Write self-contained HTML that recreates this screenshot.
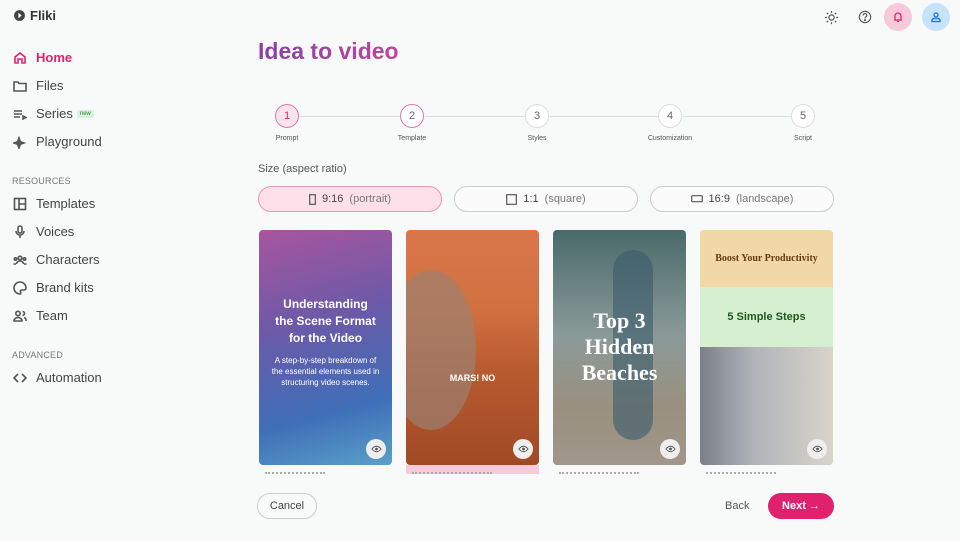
<!DOCTYPE html><html><head><style>
*{margin:0;padding:0;box-sizing:border-box}
body{width:960px;height:541px;background:#f8f9f9;font-family:"Liberation Sans",sans-serif;color:#3a3a3a;position:relative;overflow:hidden}
.a{position:absolute}
.nav{left:13px;font-size:13px;display:flex;align-items:center;gap:9px;color:#444}
.nav svg{width:14px;height:14px;fill:none;stroke:#555;stroke-width:1.6}
.sec{left:12px;font-size:9px;color:#777;letter-spacing:.2px}
.step{width:24px;height:24px;border-radius:50%;border:1px solid #ddd;background:#fff;font-size:11px;color:#666;display:flex;align-items:center;justify-content:center}
.sl{font-size:7px;color:#555;text-align:center;width:80px}
.line{height:1px;background:#ddd;top:116px}
.btn{top:186px;height:26px;width:184px;border:1px solid #ccc;border-radius:13px;font-size:11px;color:#444;display:flex;align-items:center;justify-content:center;gap:6px;background:#fbfbfb}
.btn span{color:#777}
.card{top:230px;width:133px;height:235px;border-radius:4px;overflow:hidden}
.eye{position:absolute;right:6px;bottom:6px;width:20px;height:20px;border-radius:50%;background:#eee;display:flex;align-items:center;justify-content:center}
.cap{top:472px;height:3px;border-top:2px dotted #aaa;width:80px}
</style></head><body>
<div class="a" style="left:13px;top:8px;font-size:13px;font-weight:bold;color:#333;display:flex;align-items:center;gap:4px"><svg width="13" height="13" viewBox="0 0 12 12"><circle cx="6" cy="6" r="5" fill="#444"/><path d="M5 3.5L8 6 5 8.5z" fill="#fff"/></svg>Fliki</div>
<div class="a nav" style="top:50px;color:#e0226e;font-weight:bold"><svg viewBox="0 0 14 14" style="stroke:#e0226e"><path d="M2 6L7 2l5 4v6H9V8H5v4H2z"/></svg>Home</div>
<div class="a nav" style="top:78px"><svg viewBox="0 0 14 14"><path d="M1 3h4l1 1.5h7V12H1z"/></svg>Files</div>
<div class="a nav" style="top:106px"><svg viewBox="0 0 14 14"><path d="M1 4h8M1 7h8M1 10h6M10 9l3 1.5-3 1.5z"/></svg>Series<span style="font-size:6px;background:#d8f3dc;color:#2a8a40;padding:1px 3px;border-radius:2px;margin-left:-5px">new</span></div>
<div class="a nav" style="top:134px"><svg viewBox="0 0 14 14"><path d="M6 3l1.3 3.7L11 8l-3.7 1.3L6 13l-1.3-3.7L1 8l3.7-1.3z" fill="#555"/></svg>Playground</div>
<div class="a sec" style="top:176px">RESOURCES</div>
<div class="a nav" style="top:196px"><svg viewBox="0 0 14 14"><rect x="1.5" y="1.5" width="11" height="11"/><path d="M6 1.5v11M6 7h6.5"/></svg>Templates</div>
<div class="a nav" style="top:224px"><svg viewBox="0 0 14 14"><rect x="5" y="1" width="4" height="7" rx="2"/><path d="M3 6a4 4 0 008 0M7 10v3"/></svg>Voices</div>
<div class="a nav" style="top:252px"><svg viewBox="0 0 14 14"><circle cx="7" cy="5" r="1.8"/><circle cx="2.5" cy="6" r="1.2"/><circle cx="11.5" cy="6" r="1.2"/><path d="M3.5 11a3.5 3 0 017 0M0.5 11h2.5M11 11h2.5"/></svg>Characters</div>
<div class="a nav" style="top:280px"><svg viewBox="0 0 14 14"><path d="M7 1a6 6 0 100 12c1 0 1-1 .5-2s0-2 1.5-2h2a2 2 0 002-2A6 6 0 007 1z"/></svg>Brand kits</div>
<div class="a nav" style="top:308px"><svg viewBox="0 0 14 14"><circle cx="5" cy="4.5" r="2.2"/><path d="M1 12a4 3.5 0 018 0zM9.5 2.5a2 2 0 010 4M11 8.5a3 3 0 012 3.5"/></svg>Team</div>
<div class="a sec" style="top:350px">ADVANCED</div>
<div class="a nav" style="top:370px"><svg viewBox="0 0 14 14"><path d="M5 3L1 7l4 4M9 3l4 4-4 4"/></svg>Automation</div>

<svg class="a" style="left:824px;top:10px" width="15" height="15" viewBox="0 0 16 16" fill="none" stroke="#555" stroke-width="1.3"><circle cx="8" cy="8" r="2.8"/><path d="M8 1v2M8 13v2M1 8h2M13 8h2M3 3l1.4 1.4M11.6 11.6L13 13M3 13l1.4-1.4M11.6 4.4L13 3"/></svg>
<svg class="a" style="left:858px;top:10px" width="14" height="14" viewBox="0 0 16 16" fill="none" stroke="#555" stroke-width="1.3"><circle cx="8" cy="8" r="6.5"/><path d="M6 6.2a2 2 0 113 1.6c-.8.4-1 .9-1 1.7"/><circle cx="8" cy="11.5" r=".5" fill="#555"/></svg>
<div class="a" style="left:884px;top:3px;width:28px;height:28px;border-radius:50%;background:#f8c9d8;display:flex;align-items:center;justify-content:center"><svg width="12" height="12" viewBox="0 0 12 12" fill="none" stroke="#e0226e" stroke-width="1.3"><path d="M3 9V5a3 3 0 016 0v4zM2 9h8M5 10.5h2"/></svg></div>
<div class="a" style="left:922px;top:3px;width:28px;height:28px;border-radius:50%;background:#c7e2fb;display:flex;align-items:center;justify-content:center"><svg width="12" height="12" viewBox="0 0 12 12" fill="none" stroke="#1c74d4" stroke-width="1.3"><circle cx="6" cy="4" r="2"/><path d="M2 10.5h8V9a2 2 0 00-2-1.5H4A2 2 0 002 9z"/></svg></div>

<div class="a" style="left:258px;top:38px;font-size:23px;font-weight:bold;background:linear-gradient(90deg,#8a3fa8,#c0459a);-webkit-background-clip:text;color:transparent">Idea to video</div>

<div class="a line" style="left:300px;width:100px"></div>
<div class="a line" style="left:425px;width:100px"></div>
<div class="a line" style="left:550px;width:108px"></div>
<div class="a line" style="left:683px;width:108px"></div>
<div class="a step" style="left:275px;top:104px;border-color:#e07aa0;background:#fde4ec;color:#d61f6a">1</div>
<div class="a step" style="left:400px;top:104px;border-color:#e07aa0">2</div>
<div class="a step" style="left:525px;top:104px">3</div>
<div class="a step" style="left:658px;top:104px">4</div>
<div class="a step" style="left:791px;top:104px">5</div>
<div class="a sl" style="left:247px;top:135px">Prompt</div>
<div class="a sl" style="left:372px;top:135px">Template</div>
<div class="a sl" style="left:497px;top:135px">Styles</div>
<div class="a sl" style="left:630px;top:135px">Customization</div>
<div class="a sl" style="left:763px;top:135px">Script</div>

<div class="a" style="left:258px;top:163px;font-size:11px;color:#555">Size (aspect ratio)</div>
<div class="a btn" style="left:258px;background:#fde0ea;border-color:#e89ab6"><svg width="7" height="11"><rect x=".7" y=".7" width="5.6" height="9.6" fill="none" stroke="#555" stroke-width="1.2"/></svg>9:16 <span>(portrait)</span></div>
<div class="a btn" style="left:454px"><svg width="11" height="11"><rect x=".7" y=".7" width="9.6" height="9.6" fill="none" stroke="#555" stroke-width="1.2"/></svg>1:1 <span>(square)</span></div>
<div class="a btn" style="left:650px"><svg width="12" height="8"><rect x=".7" y=".7" width="10.6" height="6" rx="1" fill="none" stroke="#555" stroke-width="1.2"/></svg>16:9 <span>(landscape)</span></div>

<div class="a card" style="left:259px;background:linear-gradient(165deg,#a8559e 0%,#6a5aa8 40%,#3f6fb8 75%,#5aa0c8 100%);color:#fff;text-align:center">
<div style="margin-top:66px;font-size:12px;font-weight:bold;line-height:17px">Understanding<br>the Scene Format<br>for the Video</div>
<div style="margin-top:8px;font-size:8px;line-height:11px;padding:0 10px">A step-by-step breakdown of the essential elements used in structuring video scenes.</div>
<div class="eye"><svg width="11" height="8" viewBox="0 0 12 8"><path d="M1 4q5-6 10 0-5 6-10 0z" fill="none" stroke="#555"/><circle cx="6" cy="4" r="1.5" fill="#555"/></svg></div></div>
<div class="a" style="left:406px;top:465px;width:133px;height:9px;background:#f8c9da"></div>
<div class="a cap" style="left:265px;width:60px"></div>
<div class="a cap" style="left:412px"></div>
<div class="a cap" style="left:559px"></div>
<div class="a cap" style="left:706px;width:70px"></div>
<div class="a card" style="left:406px;background:linear-gradient(180deg,#d9774a 0%,#d07040 35%,#b85a30 60%,#a04a25 100%);color:#fff;text-align:center">
<div style="position:absolute;left:-20px;top:40px;width:90px;height:160px;border-radius:50%;background:#9c8070;opacity:.7"></div>
<div style="position:absolute;left:0;top:143px;width:100%;font-size:9px;font-weight:bold">MARS! NO</div>
<div class="eye"><svg width="11" height="8" viewBox="0 0 12 8"><path d="M1 4q5-6 10 0-5 6-10 0z" fill="none" stroke="#555"/><circle cx="6" cy="4" r="1.5" fill="#555"/></svg></div></div>
<div class="a card" style="left:553px;background:linear-gradient(180deg,#4a6a6a 0%,#8a9a98 45%,#9a9080 75%,#a0968a 100%);color:#fff;text-align:center">
<div style="position:absolute;left:60px;top:20px;width:40px;height:190px;border-radius:20px;background:#3a5a6a;opacity:.6"></div>
<div style="position:absolute;width:100%;top:78px;font-family:'Liberation Serif',serif;font-size:22px;font-weight:bold;line-height:26px">Top 3<br>Hidden<br>Beaches</div>
<div class="eye"><svg width="11" height="8" viewBox="0 0 12 8"><path d="M1 4q5-6 10 0-5 6-10 0z" fill="none" stroke="#555"/><circle cx="6" cy="4" r="1.5" fill="#555"/></svg></div></div>
<div class="a card" style="left:700px;background:#ccc">
<div style="height:57px;background:#f0d9a6;color:#6a3a10;font-family:'Liberation Serif',serif;font-size:10px;font-weight:bold;display:flex;align-items:center;justify-content:center">Boost Your Productivity</div>
<div style="height:60px;background:#d6efd0;color:#1e5a1e;font-size:11px;font-weight:bold;display:flex;align-items:center;justify-content:center">5 Simple Steps</div>
<div style="height:118px;background:linear-gradient(90deg,#7a8088,#b0b4b8 40%,#d8d4cc)"></div>
<div class="eye"><svg width="11" height="8" viewBox="0 0 12 8"><path d="M1 4q5-6 10 0-5 6-10 0z" fill="none" stroke="#555"/><circle cx="6" cy="4" r="1.5" fill="#555"/></svg></div></div>

<div class="a" style="left:257px;top:493px;width:60px;height:26px;border:1px solid #ccc;border-radius:13px;font-size:11px;color:#444;display:flex;align-items:center;justify-content:center">Cancel</div>
<div class="a" style="left:725px;top:500px;font-size:11px;color:#555">Back</div>
<div class="a" style="left:768px;top:493px;width:66px;height:26px;border-radius:13px;background:#e0226e;color:#fff;font-size:11px;font-weight:bold;display:flex;align-items:center;justify-content:center">Next →</div>
</body></html>
